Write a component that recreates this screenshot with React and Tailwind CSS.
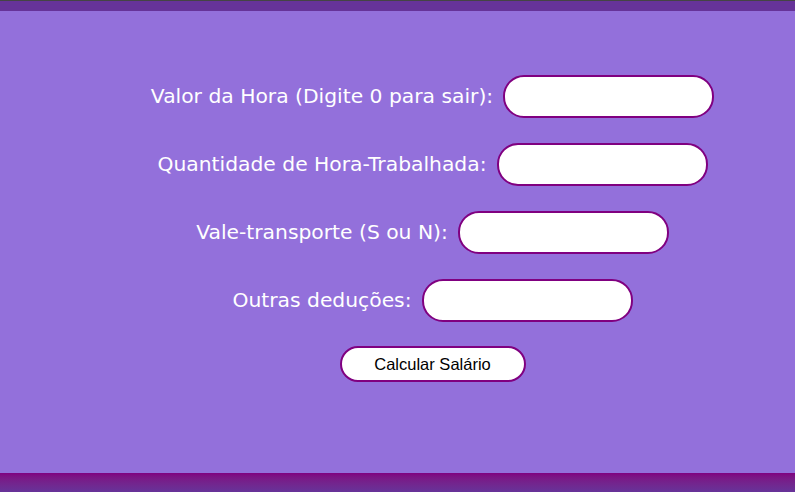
export default function App() {
  const rows = [
    "Valor da Hora (Digite 0 para sair):",
    "Quantidade de Hora-Trabalhada:",
    "Vale-transporte (S ou N):",
    "Outras deduções:",
  ];
  return (
    <div className="w-[795px] h-[492px] flex flex-col bg-[#9370db]">
      <div className="h-[11px] border-t border-[#444444] bg-[#663399]" />
      <div className="flex-1 flex flex-col items-center pl-[70px] pt-[64px]">
        {rows.map((r) => (
          <div key={r} className="flex items-center h-[42px] mb-[26px] gap-[10px]">
            <span className="text-white text-[20.3px] font-['DejaVu_Sans',sans-serif]">{r}</span>
            <input className="w-[211px] h-[43px] rounded-[21px] border-2 border-[#800080] bg-white outline-none" />
          </div>
        ))}
        <button className="w-[186px] h-[36px] -mt-[1px] rounded-full border-2 border-[#800080] bg-white text-black text-[16.5px] font-['Liberation_Sans',Arial,sans-serif]">
          Calcular Salário
        </button>
      </div>
      <div className="h-[19px] bg-gradient-to-b from-[#800080] to-[#663399]" />
    </div>
  );
}
